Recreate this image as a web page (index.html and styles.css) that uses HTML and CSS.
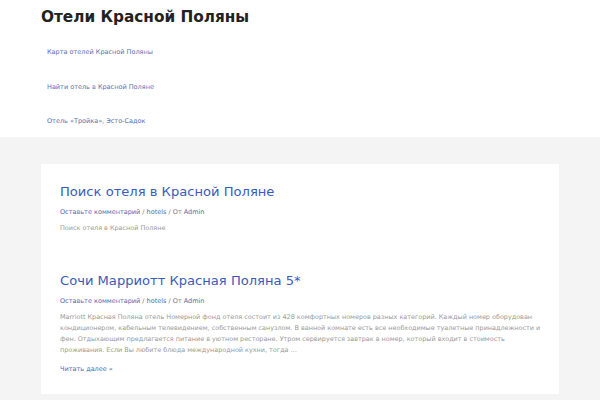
FILE: index.html
```html
<!DOCTYPE html>
<html lang="ru">
<head>
    <meta charset="UTF-8">
    <meta name="viewport" content="width=device-width, initial-scale=1.0">
    <title>Отели Красной Поляны</title>
    <link rel="stylesheet" href="styles.css">
</head>
<body>

    <header class="site-header">
        <div class="site-title">Отели Красной Поляны</div>
        <nav class="site-nav">
            <a href="#">Карта отелей Красной Поляны</a>
            <a href="#">Найти отель в Красной Поляне</a>
            <a href="#">Отель «Тройка», Эсто-Садок</a>
        </nav>
    </header>

    <main class="site-content">
        <div class="posts">
            <!-- first post -->
            <article class="post">
                <h2 class="post-title"><a href="#">Поиск отеля в Красной Поляне</a></h2>
                <div class="post-meta">
                    <a href="#">Оставьте комментарий</a> / <a href="#">hotels</a> / От <a href="#">Admin</a>
                </div>
                <p class="post-text">Поиск отеля в Красной Поляне</p>
            </article>

            <!-- second post -->
            <article class="post">
                <h2 class="post-title"><a href="#">Сочи Марриотт Красная Поляна 5*</a></h2>
                <div class="post-meta">
                    <a href="#">Оставьте комментарий</a> / <a href="#">hotels</a> / От <a href="#">Admin</a>
                </div>
                <p class="post-text">Marriott Красная Поляна отель Номерной фонд отеля состоит из 428 комфортных номеров разных категорий. Каждый номер оборудован кондиционером, кабельным телевидением, собственным санузлом. В ванной комнате есть все необходимые туалетные принадлежности и фен. Отдыхающим предлагается питание в уютном ресторане. Утром сервируется завтрак в номер, который входит в стоимость проживания. Если Вы любите блюда международной кухни, тогда …</p>
                <a class="read-more" href="#">Читать далее »</a>
            </article>
        </div>
    </main>

</body>
</html>
```

FILE: styles.css
```css
* {
    margin: 0;
    padding: 0;
    box-sizing: border-box;
}

body {
    font-family: "DejaVu Sans", Verdana, sans-serif;
    background: #f4f4f4;
    color: #333;
}

a {
    text-decoration: none;
    color: #3d5cb5;
}

/* header */
.site-header {
    background: #fff;
    padding: 7px 41px 0;
    height: 137px;
}

.site-title {
    font-size: 15.3px;
    font-weight: bold;
    color: #222;
    line-height: 20px;
}

.site-nav {
    display: flex;
    flex-direction: column;
    padding: 20px 0 0 6px;
    gap: 23.5px;
}

.site-nav a {
    font-size: 6.5px;
    line-height: 11px;
    color: #5570b2;
}

/* posts */
.site-content {
    padding: 27px 41px 20px;
}

.posts {
    background: #fff;
    padding: 18px 17px 19px 19px;
}

.post + .post {
    margin-top: 37px;
}

.post-title {
    font-weight: normal;
    font-size: 13.1px;
    line-height: 20px;
}

.post-title a {
    color: #3a5bbb;
}

.post-meta {
    font-size: 6.5px;
    line-height: 11px;
    color: #777;
    margin-top: 5px;
}

.post-meta a {
    color: #5069b0;
}

.post-text {
    font-size: 6.45px;
    line-height: 11px;
    color: #999;
    margin-top: 5px;
}

.read-more {
    display: inline-block;
    font-size: 6.5px;
    line-height: 11px;
    color: #4d68b0;
    margin-top: 7px;
}
```
